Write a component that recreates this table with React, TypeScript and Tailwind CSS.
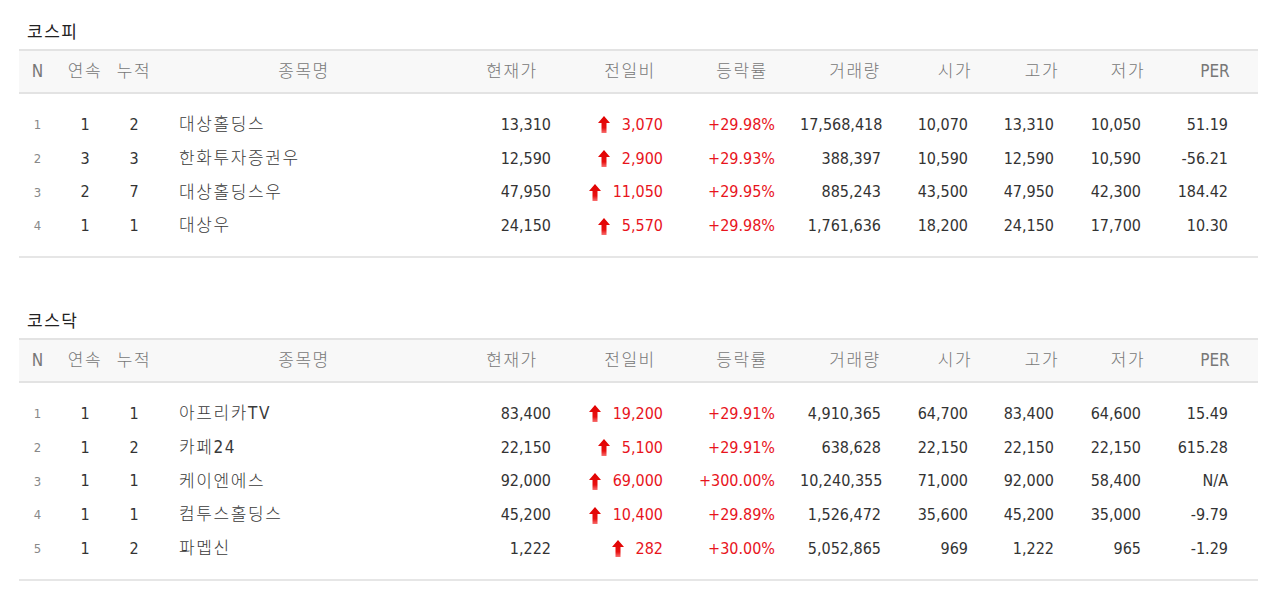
const font = "font-['DejaVu_Sans_Condensed','DejaVu_Sans','Noto_Sans_CJK_KR',sans-serif]";

type Row = {
  n: number;
  streak: number;
  total: number;
  name: string;
  price: string;
  diff: string;
  rate: string;
  volume: string;
  open: string;
  high: string;
  low: string;
  per: string;
};

const kospi: Row[] = [
  { n: 1, streak: 1, total: 2, name: "대상홀딩스", price: "13,310", diff: "3,070", rate: "+29.98%", volume: "17,568,418", open: "10,070", high: "13,310", low: "10,050", per: "51.19" },
  { n: 2, streak: 3, total: 3, name: "한화투자증권우", price: "12,590", diff: "2,900", rate: "+29.93%", volume: "388,397", open: "10,590", high: "12,590", low: "10,590", per: "-56.21" },
  { n: 3, streak: 2, total: 7, name: "대상홀딩스우", price: "47,950", diff: "11,050", rate: "+29.95%", volume: "885,243", open: "43,500", high: "47,950", low: "42,300", per: "184.42" },
  { n: 4, streak: 1, total: 1, name: "대상우", price: "24,150", diff: "5,570", rate: "+29.98%", volume: "1,761,636", open: "18,200", high: "24,150", low: "17,700", per: "10.30" },
];

const kosdaq: Row[] = [
  { n: 1, streak: 1, total: 1, name: "아프리카TV", price: "83,400", diff: "19,200", rate: "+29.91%", volume: "4,910,365", open: "64,700", high: "83,400", low: "64,600", per: "15.49" },
  { n: 2, streak: 1, total: 2, name: "카페24", price: "22,150", diff: "5,100", rate: "+29.91%", volume: "638,628", open: "22,150", high: "22,150", low: "22,150", per: "615.28" },
  { n: 3, streak: 1, total: 1, name: "케이엔에스", price: "92,000", diff: "69,000", rate: "+300.00%", volume: "10,240,355", open: "71,000", high: "92,000", low: "58,400", per: "N/A" },
  { n: 4, streak: 1, total: 1, name: "컴투스홀딩스", price: "45,200", diff: "10,400", rate: "+29.89%", volume: "1,526,472", open: "35,600", high: "45,200", low: "35,000", per: "-9.79" },
  { n: 5, streak: 1, total: 2, name: "파멥신", price: "1,222", diff: "282", rate: "+30.00%", volume: "5,052,865", open: "969", high: "1,222", low: "965", per: "-1.29" },
];

const cols = "grid grid-cols-[43px_46px_52px_288px_128px_108px_116px_110px_90px_84px_88px_86px]";
const headers = ["N", "연속", "누적", "종목명", "현재가", "전일비", "등락률", "거래량", "시가", "고가", "저가", "PER"];

function UpArrow() {
  return (
    <svg width="12" height="17" viewBox="0 0 12 17" className="shrink-0">
      <defs>
        <linearGradient id="upred" x1="0" y1="0" x2="0" y2="1">
          <stop offset="0%" stopColor="#e00000" />
          <stop offset="70%" stopColor="#e81010" />
          <stop offset="100%" stopColor="#f87070" />
        </linearGradient>
      </defs>
      <path d="M6 0 L12 7 L8.5 7 L8.5 17 L3.5 17 L3.5 7 L0 7 Z" fill="url(#upred)" />
    </svg>
  );
}

function Table({ title, rows, last }: { title: string; rows: Row[]; last?: boolean }) {
  return (
    <section className={last ? "" : "mb-[51px]"}>
      <h2 className="h-[24px] leading-[24px] mb-[5px] pl-[8px] text-[17px] text-[#222] tracking-[1.5px]">{title}</h2>
      <div className={`${cols} h-[45px] border-y-2 border-[#e3e3e3] bg-[#f8f8f8] items-center text-[17px] text-[#777] font-light`}>
        {headers.map((h, i) => (
          <div key={h} className={i === 0 ? "text-center pr-[6px]" : h === "PER" ? "text-center" : "text-center tracking-[1.5px]"}>
            {h}
          </div>
        ))}
      </div>
      <div className="pt-[14px] pb-[13px] border-b-2 border-[#e6e6e6]">
        {rows.map((r) => (
          <div key={r.n} className={`${cols} h-[33.75px] items-center text-[16px] text-[#333]`}>
            <div className="text-center text-[13px] text-[#888] pr-[6px]">{r.n}</div>
            <div className="text-center">{r.streak}</div>
            <div className="text-center">{r.total}</div>
            <div className="pl-[19px] text-[17px] tracking-[1.6px] font-light text-[#3a3a3a]">{r.name}</div>
            <div className="text-right pr-[25px]">{r.price}</div>
            <div className="flex items-center justify-end gap-[12px] pr-[21px] text-[#e8141c]">
              <UpArrow />
              <span>{r.diff}</span>
            </div>
            <div className="text-right pr-[25px] text-[#e8141c]">{r.rate}</div>
            <div className="text-right pr-[29px]">{r.volume}</div>
            <div className="text-right pr-[32px]">{r.open}</div>
            <div className="text-right pr-[30px]">{r.high}</div>
            <div className="text-right pr-[31px]">{r.low}</div>
            <div className="text-right pr-[30px]">{r.per}</div>
          </div>
        ))}
      </div>
    </section>
  );
}

export default function App() {
  return (
    <div className={`${font} w-[1280px] h-[590px] bg-white pt-[20px] pl-[19px] overflow-hidden`}>
      <div className="w-[1239px]">
        <Table title="코스피" rows={kospi} />
        <Table title="코스닥" rows={kosdaq} last />
      </div>
    </div>
  );
}
